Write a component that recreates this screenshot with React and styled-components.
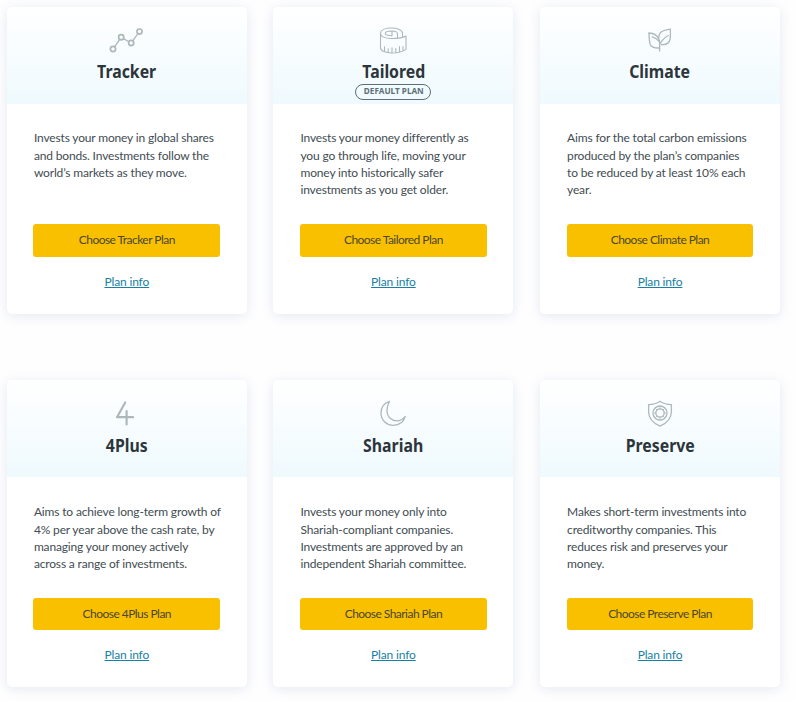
import React from "react";
import styled, { createGlobalStyle } from "styled-components";

const GlobalStyle = createGlobalStyle`
  * { box-sizing: border-box; }
  body {
    margin: 0;
    background: #fefeff;
    color: #424c52;
    font-family: Lato, "Noto Sans", sans-serif;
    overflow: hidden;
  }
`;

const PlanGrid = styled.main`
  display: grid;
  grid-template-columns: repeat(3, 240px);
  grid-auto-rows: 307px;
  column-gap: 26.6px;
  row-gap: 66.8px;
  padding: 6.6px 0 15px 6.8px;
`;

const Card = styled.article`
  display: flex;
  flex-direction: column;
  background: #fff;
  border-radius: 5px;
  box-shadow: 0 2px 12px rgba(60, 85, 125, 0.13);
  overflow: hidden;
`;

const CardHeader = styled.header`
  display: flex;
  flex-direction: column;
  align-items: center;
  height: 97px;
  padding-top: 17px;
  background: linear-gradient(#fff, #effafe);
`;

const Icon = styled.svg`
  display: block;
  width: 36px;
  height: 32px;
  fill: none;
  stroke: #aeb8bb;
  stroke-width: 1.3;
  stroke-linecap: round;
  stroke-linejoin: round;
`;

const Title = styled.h2`
  margin: 3.3px 0 0;
  height: 24.7px;
  font-family: "Noto Sans", sans-serif;
  font-size: 18px;
  line-height: 25px;
  font-weight: 700;
  color: #2c353b;
  white-space: nowrap;
  transform: scaleX(0.88);
`;

const Badge = styled.span`
  display: flex;
  justify-content: center;
  width: 76px;
  height: 16px;
  border: 1px solid #5c7078;
  border-radius: 8px;
  color: #5c7078;
`;

const BadgeLabel = styled.span`
  font-family: "Noto Sans", sans-serif;
  font-size: 9.5px;
  line-height: 12px;
  font-weight: 700;
  white-space: nowrap;
  transform: scaleX(0.86);
`;

const CardBody = styled.div`
  display: flex;
  flex-direction: column;
  align-items: center;
  padding: 25.8px 26.6px 0;
`;

const Description = styled.p`
  align-self: stretch;
  height: 94.6px;
  margin: 0;
  padding-left: 0.5px;
  font-size: 12px;
  line-height: 17.33px;
  letter-spacing: -0.16px;
`;

const Line = styled.span`
  display: block;
  width: max-content;
  white-space: nowrap;
`;

const ChooseButton = styled.button`
  width: 186.7px;
  height: 32.6px;
  padding: 0 0 1px;
  border: 0;
  border-radius: 3px;
  background: #f9c000;
  color: #4c4630;
  font: inherit;
  font-size: 12px;
  letter-spacing: -0.54px;
  line-height: 31px;
`;

const InfoLink = styled.a`
  margin-top: 16px;
  font-size: 12px;
  letter-spacing: -0.15px;
  line-height: 18px;
  color: #1681a5;
  text-decoration: underline;
`;

const TrackerIcon = () => (
  <Icon viewBox="0 0 36 32">
    <circle cx="4" cy="25" r="2.6" strokeWidth="1.7" />
    <circle cx="12.2" cy="13.3" r="2.6" strokeWidth="1.7" />
    <circle cx="22.2" cy="19" r="2.6" strokeWidth="1.7" />
    <circle cx="30.5" cy="7.6" r="2.6" strokeWidth="1.7" />
    <path d="M5.5 22.8l5.2-7.3M14.5 14.6l5.4 3.1M23.7 16.8l5.2-7.1" />
  </Icon>
);

const TapeIcon = () => (
  <Icon viewBox="0 0 36 32">
    <path strokeWidth="1.1" d="M5.5 9.5c0 3 4.5 5 10.5 5 6 .1 11.5-.6 15-2.5v13.4C28 27.6 22.500 29 17 29c-6.500 0-11.500-2-11.500-5.200zM5.500 9.500C5.500 6 10.300 4 16.500 4S27.500 6 27.500 9.300v3.900M22.500 13.800V9.800C22.500 8 19.800 7 16.600 7c-3.400 0-6.400 1-6.400 2.600 0 1.700 3 2.200 6.800 2.200V7.200M9.500 26.700v-4M13.200 28.200v-3.500M17 28.700v-5M20.800 28.400v-3.800M24.500 27.500v-5M28 26v-3.500" />
  </Icon>
);

const LeavesIcon = () => (
  <Icon viewBox="0 0 36 32">
    <path d="M17.600 27V17.800c-2-2.500-4.400-4.200-7.300-5M16.500 24c-4 0-7.200-.6-8.400-3.800C7.200 17.400 7.300 13 6.800 9c4 .1 8.200 1.700 10 6M17.700 20.200c2.200-3.800 4.800-6.600 8.600-8.700M19.400 20.500c5.200.6 8-1.500 8.800-5.900.5-3 .2-6.400.1-9.600-3 1-7.700.9-10.200 4.200-1.800 2.500-1.700 5.200-.5 8.500" />
  </Icon>
);

const FourIcon = () => (
  <Icon viewBox="0 0 36 32">
    <path strokeWidth="2.200" d="M16.200 5.500L8 20.200H24M17.600 14v13.500" />
  </Icon>
);

const MoonIcon = () => (
  <Icon viewBox="0 0 36 32">
    <path d="M14.500 4.300C9 6 5.800 10.700 6 16.500c.2 6.800 5.700 12 12.200 11.800 6-.2 10.600-3.700 12-9-2.200 3-4.800 4.500-8.300 4.500-5.700 0-9.800-4.200-10-9.700-.1-4 1-6.800 2.600-9.800z" />
  </Icon>
);

const ShieldIcon = () => (
  <Icon viewBox="0 0 36 32">
    <path d="M18 4.300c3.400 2.400 7 3.300 11.400 3.300v7.200c0 7-4.300 11.200-11.400 14.400C10.900 26 6.600 21.800 6.600 14.800V7.600C11 7.600 14.600 6.700 18 4.300z" />
    <circle cx="18" cy="16" r="7" />
    <circle cx="18" cy="16" r="4.200" />
    <path d="M18 10v2M18 20v2M12 16h2M22 16h2M13.800 11.800l1.300 1.300M20.900 18.900l1.300 1.300M22.200 11.800l-1.300 1.300M15.100 18.900l-1.300 1.300" strokeWidth="0.800" />
  </Icon>
);

const plans = [
  { name: "Tracker", Glyph: TrackerIcon, lines: ["Invests your money in global shares", "and bonds. Investments follow the", "world’s markets as they move."] },
  { name: "Tailored", Glyph: TapeIcon, isDefault: true, lines: ["Invests your money differently as", "you go through life, moving your", "money into historically safer", "investments as you get older."] },
  { name: "Climate", Glyph: LeavesIcon, lines: ["Aims for the total carbon emissions", "produced by the plan’s companies", "to be reduced by at least 10% each", "year."] },
  { name: "4Plus", Glyph: FourIcon, lines: ["Aims to achieve long-term growth of", "4% per year above the cash rate, by", "managing your money actively", "across a range of investments."] },
  { name: "Shariah", Glyph: MoonIcon, lines: ["Invests your money only into", "Shariah-compliant companies.", "Investments are approved by an", "independent Shariah committee."] },
  { name: "Preserve", Glyph: ShieldIcon, lines: ["Makes short-term investments into", "creditworthy companies. This", "reduces risk and preserves your", "money."] },
];

export default function App() {
  return (
    <>
      <GlobalStyle />
      <PlanGrid>
        {plans.map(({ name, Glyph, isDefault, lines }) => (
          <Card key={name}>
            <CardHeader>
              <Glyph />
              <Title>{name}</Title>
              {isDefault && (
                <Badge>
                  <BadgeLabel>DEFAULT PLAN</BadgeLabel>
                </Badge>
              )}
            </CardHeader>
            <CardBody>
              <Description>
                {lines.map((line) => <Line key={line}>{line}</Line>)}
              </Description>
              <ChooseButton>Choose {name} Plan</ChooseButton>
              <InfoLink href="#">Plan info</InfoLink>
            </CardBody>
          </Card>
        ))}
      </PlanGrid>
    </>
  );
}
